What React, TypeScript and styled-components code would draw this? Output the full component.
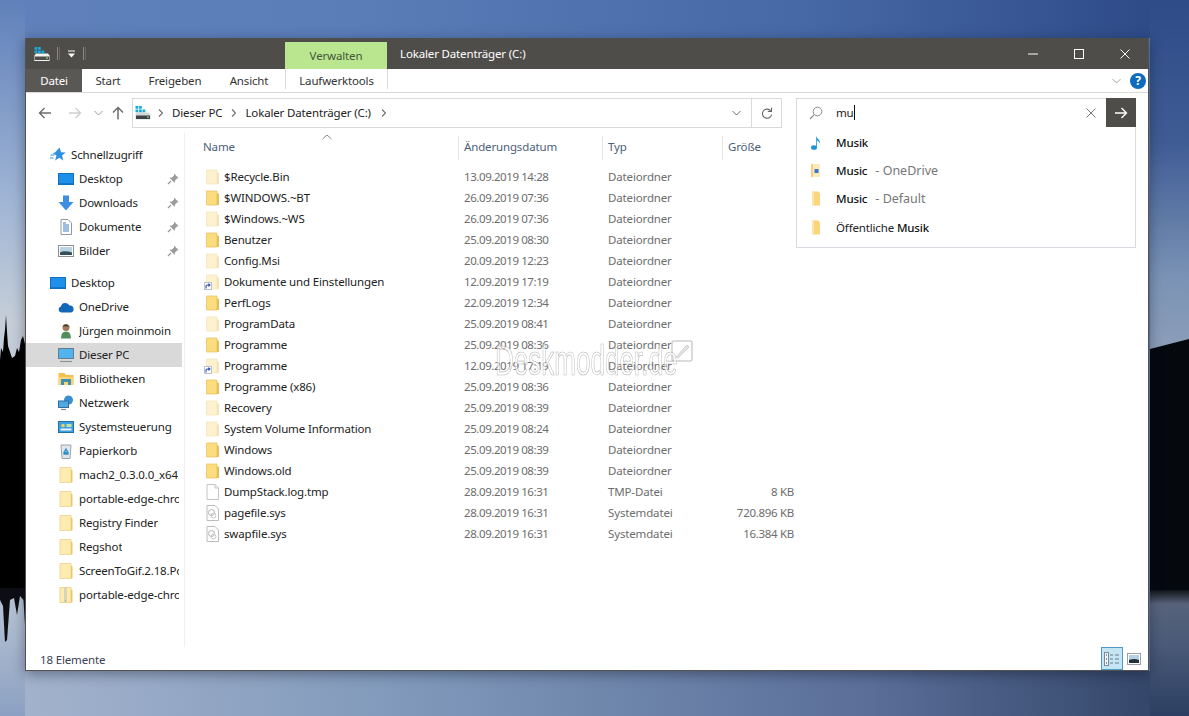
import styled, { createGlobalStyle } from "styled-components";

const FONT = `"Noto Sans", "Open Sans", "Liberation Sans", sans-serif`;

const GlobalStyle = createGlobalStyle`
  html, body {
    margin: 0;
    height: 100%;
    overflow: hidden;
    font-family: ${FONT};
    font-size: 11.5px;
    letter-spacing: -0.15px;
  }
`;

const Desktop = styled.div`
  position: relative;
  box-sizing: border-box;
  width: 100vw;
  height: 100vh;
  padding: 38px 40px 45px 25px;
  display: flex;
  background: #5c7fb9;
`;

const Wallpaper = styled.svg`
  position: absolute;
  inset: 0;
  width: 100%;
  height: 100%;
`;

const Window = styled.div`
  position: relative;
  flex: 1;
  display: flex;
  flex-direction: column;
  background: #fff;
  border: 1px solid #55534f;
  border-top: 0;
  box-shadow: 0 3px 12px rgba(10, 15, 30, 0.4);
`;

const TitleBar = styled.div`
  height: 31px;
  flex: none;
  display: flex;
  align-items: stretch;
  background: #4f4d4a;
  color: #fff;
`;

const QuickAccess = styled.div`
  width: 259px;
  display: flex;
  align-items: center;
  padding-left: 8px;
  box-sizing: border-box;
  gap: 7px;
`;

const QuickBar = styled.span`
  width: 3px;
  height: 13px;
  border-left: 1px solid #8c8a87;
  border-right: 1px solid #6a6865;
  box-sizing: border-box;
`;

const ContextTab = styled.div`
  width: 102px;
  height: 27px;
  align-self: flex-end;
  background: #b9e68f;
  color: #47563a;
  display: flex;
  align-items: center;
  justify-content: center;
`;

const WindowTitle = styled.div`
  margin-left: 13px;
  display: flex;
  align-items: center;
`;

const Controls = styled.div`
  margin-left: auto;
  display: flex;
`;

const ControlButton = styled.div`
  width: 46px;
  display: flex;
  align-items: center;
  justify-content: center;
`;

const Ribbon = styled.div`
  height: 24px;
  flex: none;
  box-sizing: border-box;
  display: flex;
  align-items: stretch;
  border-bottom: 1px solid #dadada;
  color: #333;
`;

const RibbonTab = styled.div<{ $w: number; $file?: boolean; $context?: boolean }>`
  width: ${(p) => p.$w}px;
  box-sizing: border-box;
  display: flex;
  align-items: center;
  justify-content: center;
  margin-left: ${(p) => (p.$context ? 3 : 0)}px;
  background: ${(p) => (p.$file ? "#5a5855" : "transparent")};
  color: ${(p) => (p.$file ? "#fff" : "#333")};
  border-left: ${(p) => (p.$context ? "1px solid #dcdcdc" : "0")};
  border-right: ${(p) => (p.$context ? "1px solid #dcdcdc" : "0")};
  height: ${(p) => (p.$context ? "20px" : "auto")};
  padding-top: ${(p) => (p.$context ? 2 : 0)}px;
`;

const RibbonEnd = styled.div`
  margin-left: auto;
  display: flex;
  align-items: center;
  gap: 9px;
  padding-right: 2px;
`;

const HelpBadge = styled.div`
  width: 16px;
  height: 16px;
  border-radius: 50%;
  background: #0f6cbd;
  color: #fff;
  font-size: 12px;
  font-weight: 700;
  line-height: 16px;
  text-align: center;
`;

const NavBar = styled.div`
  height: 40px;
  flex: none;
  box-sizing: border-box;
  padding-top: 5px;
  display: flex;
  align-items: flex-start;
`;

const NavArrows = styled.div`
  width: 106px;
  height: 30px;
  flex: none;
  display: flex;
  align-items: center;
  padding-left: 12px;
  box-sizing: border-box;
`;

const NavArrow = styled.span<{ $w: number; $ml?: number }>`
  width: ${(p) => p.$w}px;
  margin-left: ${(p) => p.$ml ?? 0}px;
  display: flex;
  justify-content: center;
`;

const AddressBox = styled.div`
  width: 650px;
  height: 30px;
  box-sizing: border-box;
  border: 1px solid #d9d9d9;
  display: flex;
  align-items: center;
  padding-left: 2px;
  color: #222;
`;

const Crumb = styled.span`
  white-space: nowrap;
  padding-bottom: 2px;
`;

const CrumbArrow = styled.span<{ $l: number; $r: number }>`
  display: flex;
  margin: 0 ${(p) => p.$r}px 0 ${(p) => p.$l}px;
`;

const AddressEnd = styled.div`
  margin-left: auto;
  height: 100%;
  display: flex;
  align-items: center;
`;

const AddressButton = styled.div<{ $divider?: boolean }>`
  width: 30px;
  height: 100%;
  display: flex;
  align-items: center;
  justify-content: center;
  box-sizing: border-box;
  border-left: ${(p) => (p.$divider ? "1px solid #d9d9d9" : "0")};
`;

const SearchWrap = styled.div`
  position: relative;
  width: 340px;
  margin-left: 14px;
  z-index: 2;
`;

const SearchBox = styled.div`
  height: 30px;
  box-sizing: border-box;
  border: 1px solid #d9d9d9;
  border-right: 0;
  display: flex;
  align-items: center;
  padding-left: 12px;
  background: #fff;
`;

const SearchText = styled.span`
  margin-left: 13px;
  padding-bottom: 2px;
  color: #222;
`;

const Caret = styled.span`
  display: inline-block;
  width: 1px;
  height: 15px;
  background: #111;
  vertical-align: -3px;
`;

const ClearButton = styled.span`
  margin-left: auto;
  margin-right: 10px;
  display: flex;
`;

const GoButton = styled.div`
  width: 30px;
  height: 30px;
  margin-top: -1px;
  margin-bottom: -1px;
  background: #4f4d4a;
  display: flex;
  align-items: center;
  justify-content: center;
`;

const Suggestions = styled.div`
  position: absolute;
  top: 29px;
  left: 0;
  right: 0;
  height: 121px;
  box-sizing: border-box;
  background: #fff;
  border: 1px solid #d9dbe2;
  border-top: 0;
  padding-top: 1px;
`;

const SuggestionRow = styled.div`
  height: 28.4px;
  display: flex;
  align-items: center;
  padding-left: 14px;
  gap: 15px;
  color: #222;
`;

const Hit = styled.b`
  font-weight: 500;
  color: #111;
`;

const Where = styled.span`
  color: #777;
  margin-left: 8px;
  font-size: 12.5px;
  letter-spacing: 0;
`;

const Body = styled.div`
  flex: 1;
  min-height: 0;
  display: flex;
`;

const NavPane = styled.nav`
  width: 159px;
  flex: none;
  box-sizing: border-box;
  padding-top: 10px;
  border-right: 1px solid #f0f0f0;
  margin-bottom: 0;
`;

const NavRow = styled.div<{ $top?: boolean; $selected?: boolean; $gap?: boolean }>`
  width: 156px;
  height: 24px;
  box-sizing: border-box;
  display: flex;
  align-items: center;
  gap: 5px;
  padding-left: ${(p) => (p.$top ? 24 : 32)}px;
  padding-right: 3px;
  margin-top: ${(p) => (p.$gap ? 8 : 0)}px;
  background: ${(p) => (p.$selected ? "#d9d9d9" : "transparent")};
  color: #222;
  white-space: nowrap;
  overflow: hidden;
`;

const IconSlot = styled.span`
  width: 16px;
  height: 16px;
  flex: none;
  display: flex;
`;

const NavLabel = styled.span`
  overflow: hidden;
  padding-bottom: 2px;
`;

const Pin = styled.span`
  margin-left: auto;
  display: flex;
`;

const FilePane = styled.div`
  flex: 1;
  position: relative;
  min-width: 0;
`;

const ColumnHeader = styled.div`
  height: 33px;
  box-sizing: border-box;
  padding-top: 3px;
  display: grid;
  grid-template-columns: 274px 144px 120px 72px;
  align-items: start;
  color: #4c607a;
`;

const HeaderCell = styled.div<{ $first?: boolean }>`
  height: 24px;
  display: flex;
  align-items: center;
  padding-left: ${(p) => (p.$first ? 18 : 5)}px;
  padding-bottom: 3px;
  box-sizing: border-box;
  border-right: 1px solid #e5e5e5;

  &:last-child {
    border-right: 0;
  }
`;

const SortMark = styled.svg`
  position: absolute;
  left: 137px;
  top: 1px;
`;

const FileRow = styled.div`
  height: 21px;
  display: grid;
  grid-template-columns: 258px 144px 120px 66px;
  padding-left: 21px;
  align-items: center;
  color: #6d6d6d;
`;

const FileName = styled.div`
  display: flex;
  align-items: center;
  gap: 5px;
  color: #222;
  white-space: nowrap;
`;

const FileDate = styled.div`
  letter-spacing: -0.42px;
`;

const FileIconSlot = styled.span`
  width: 13px;
  height: 16px;
  display: flex;
  position: relative;
`;

const ShortcutBadge = styled.svg`
  position: absolute;
  left: -2px;
  bottom: 0;
`;

const FileSize = styled.div`
  text-align: right;
  letter-spacing: -0.3px;
`;

const Watermark = styled.div`
  position: absolute;
  left: 310px;
  top: 204px;
  display: flex;
  align-items: flex-start;
  pointer-events: none;
`;

const WatermarkText = styled.span`
  font-family: "Liberation Sans", sans-serif;
  font-size: 42px;
  line-height: 48px;
  letter-spacing: 0;
  color: rgba(255, 255, 255, 0.6);
  -webkit-text-stroke: 0.7px rgba(110, 110, 110, 0.5);
  transform: scaleX(0.62);
  transform-origin: left top;
  width: 176px;
  white-space: nowrap;
`;

const WatermarkMark = styled.svg`
  margin-top: 3px;
`;

const StatusBar = styled.div`
  height: 23px;
  flex: none;
  display: flex;
  align-items: center;
  padding-left: 14px;
  color: #3a4256;
`;

const StatusText = styled.span`
  padding-top: 2px;
`;

const ViewButtons = styled.div`
  margin-left: auto;
  height: 100%;
  display: flex;
  align-items: center;
  gap: 4px;
  padding-right: 7px;
`;

const ViewButton = styled.div<{ $active?: boolean }>`
  width: 22px;
  height: 23px;
  box-sizing: border-box;
  display: flex;
  align-items: center;
  justify-content: center;
  background: ${(p) => (p.$active ? "#c5e5f5" : "transparent")};
  border: ${(p) => (p.$active ? "1px solid #4c9cc4" : "0")};
`;

/* --- drawings --- */

type FolderProps = { pale?: boolean };

function Folder({ pale }: FolderProps) {
  const face = pale ? "#fdf2d0" : "#fbdc7e";
  const edge = pale ? "#f3e3b6" : "#e6bf57";
  return (
    <svg width="13" height="16" viewBox="0 0 13 16">
      <path d="M0.5 1h10.5v14H0.5z" fill={face} stroke={edge} strokeWidth="0.7" />
      <path d="M11 3l2 1v11h-2z" fill={edge} />
    </svg>
  );
}

function NavFolder() {
  return (
    <svg width="16" height="16" viewBox="0 0 16 16">
      <path d="M2 0.5h11v15H2z" fill="#fdebb0" stroke="#eed48a" strokeWidth="0.8" />
      <path d="M13 2.5l1.5 1v12H13z" fill="#e9c768" />
    </svg>
  );
}

function ZipFolder() {
  return (
    <svg width="16" height="16" viewBox="0 0 16 16">
      <path d="M2 0.5h11v15H2z" fill="#fdebb0" stroke="#e9cd7c" strokeWidth="0.8" />
      <path d="M13 2.5l1.5 1v12H13z" fill="#e9c768" />
      <path d="M6.5 1h2v14h-2z" fill="#b9b9b0" />
      <path d="M7 2h1M7 4h1M7 6h1M7 8h1M7 10h1M7 12h1" stroke="#fff" strokeWidth="0.8" />
    </svg>
  );
}

function PlainFile() {
  return (
    <svg width="13" height="16" viewBox="0 0 13 16">
      <path d="M1 0.5h8l3.5 3.5v11.5H1z" fill="#fff" stroke="#c4c4c4" />
      <path d="M9 0.5V4h3.5" fill="none" stroke="#c4c4c4" />
    </svg>
  );
}

function SysFile() {
  return (
    <svg width="13" height="16" viewBox="0 0 13 16">
      <path d="M1 0.5h8l3.5 3.5v11.5H1z" fill="#fff" stroke="#bcbcbc" />
      <circle cx="5.5" cy="7.5" r="3" fill="none" stroke="#b5b5b5" />
      <circle cx="7.5" cy="10.5" r="2.4" fill="none" stroke="#c6c6c6" />
    </svg>
  );
}

function Shortcut() {
  return (
    <ShortcutBadge width="8" height="8" viewBox="0 0 8 8">
      <rect x="0.5" y="0.5" width="7" height="7" fill="#fff" stroke="#b7bfd0" />
      <path d="M2 6.5V4.2Q2 3 3.6 3H5.5M4.4 1.6L6 3 4.4 4.4" fill="none" stroke="#2a4fa8" strokeWidth="1.1" />
    </ShortcutBadge>
  );
}

function Drive({ onDark }: { onDark?: boolean }) {
  return (
    <svg width="16" height="16" viewBox="0 0 16 16">
      <path d="M0.5 9.500l1.500-2h12l1.500 2v5H0.500z" fill={onDark ? "#f2f2ee" : "#d5d8d9"} />
      <path d="M1 10.500h14v3.500H1z" fill={onDark ? "#4f4d4a" : "#3f4347"} />
      {onDark && <path d="M0.500 14h15v1H0.500z" fill="#f2f2ee" />}
      <rect x="12" y="11.500" width="2" height="1.200" fill="#7fdc7f" />
      <path d="M0.500 1h2.800v2.800H0.500zM4 1h2.800v2.800H4zM0.500 4.500h2.800v2.800H0.500zM4 4.500h2.800v2.800H4zM7.500 4.500h2.800v2.800H7.500z" fill="#19a9dc" />
    </svg>
  );
}

const navIcons: Record<string, React.ReactNode> = {
  star: (
    <svg width="16" height="16" viewBox="0 0 16 16">
      <path d="M9.5 0.5l1.6 4.8 4.6 0.2-3.7 3 1.3 5-4-2.8-4.2 2.8 1.4-4.9L2.500 6l2.500-.4z" fill="#2f8fe0" />
      <path d="M0.500 8h4M0 11h3.500" stroke="#2f8fe0" strokeWidth="1" />
    </svg>
  ),
  desktop: (
    <svg width="16" height="16" viewBox="0 0 16 16">
      <rect x="0" y="2" width="16" height="12" fill="#1e90ea" />
      <rect x="0" y="12.500" width="16" height="1.500" fill="#0e5fa8" />
      <path d="M0.500 2.500h15v11h-15z" fill="none" stroke="#0f6fc0" />
    </svg>
  ),
  download: (
    <svg width="16" height="16" viewBox="0 0 16 16">
      <path d="M5 0.500h6V7h4.500L8 15.500 0.500 7H5z" fill="#3f8fe0" />
    </svg>
  ),
  docs: (
    <svg width="16" height="16" viewBox="0 0 16 16">
      <path d="M3 0.500h7l3.500 3.500v11.500H3z" fill="#fff" stroke="#8e98a6" />
      <path d="M5 4h3M5 6h6M5 8h6M5 10h6M5 12h6" stroke="#3f7fc0" />
    </svg>
  ),
  pictures: (
    <svg width="16" height="16" viewBox="0 0 16 16">
      <rect x="0.500" y="2.500" width="15" height="11" fill="#fff" stroke="#8f8f8f" />
      <rect x="2" y="4" width="12" height="8" fill="#b9d3e4" />
      <path d="M2 9.500q4-2.500 12 0V12H2z" fill="#34505c" />
    </svg>
  ),
  cloud: (
    <svg width="16" height="16" viewBox="0 0 16 16">
      <path d="M3.500 13.500a3 3 0 0 1-.6-5.900 4.500 4.500 0 0 1 8.500-1 3.500 3.500 0 0 1 1.300 6.900z" fill="#1468b8" />
    </svg>
  ),
  user: (
    <svg width="16" height="16" viewBox="0 0 16 16">
      <circle cx="8" cy="4.500" r="3.500" fill="#a17a5c" />
      <path d="M3 15.500q0-7 5-7t5 7z" fill="#4f8f5a" />
      <path d="M4.500 3.500q3-4 7 0-3.500-.7-7 0z" fill="#3a3a3a" />
    </svg>
  ),
  pc: (
    <svg width="16" height="16" viewBox="0 0 16 16">
      <rect x="0.500" y="1.500" width="15" height="10" fill="#4fb4f0" stroke="#6a7c8c" />
      <path d="M2 14.500h12" stroke="#8a949c" strokeWidth="1.200" />
    </svg>
  ),
  library: (
    <svg width="16" height="16" viewBox="0 0 16 16">
      <path d="M0.500 2h6l1.500 2h7.500v10H0.500z" fill="#f4bf4f" />
      <path d="M0.500 6h15v8H0.500z" fill="#f9d67c" />
      <rect x="3" y="8" width="10" height="6" fill="#3f8fb0" />
      <rect x="6" y="11" width="4" height="3" fill="#f9d67c" />
    </svg>
  ),
  network: (
    <svg width="16" height="16" viewBox="0 0 16 16">
      <circle cx="10.500" cy="5" r="4.500" fill="#3c8fd0" />
      <rect x="0.500" y="6" width="10" height="6.500" fill="#4fa8e0" stroke="#2f6f9f" />
      <path d="M3 14.500h5" stroke="#7f8c96" strokeWidth="1.200" />
    </svg>
  ),
  control: (
    <svg width="16" height="16" viewBox="0 0 16 16">
      <rect x="0.500" y="2.500" width="15" height="11" fill="#3f9fe0" stroke="#1f6fa8" />
      <circle cx="5" cy="6.500" r="1.800" fill="#f0d060" />
      <rect x="8.500" y="5" width="5" height="3" fill="#bfe7a0" />
      <rect x="2.500" y="9.500" width="11" height="2" fill="#e6f3fb" />
    </svg>
  ),
  bin: (
    <svg width="16" height="16" viewBox="0 0 16 16">
      <path d="M3 2h10l-1 13.500H4z" fill="#e2e6ea" stroke="#9aa4ad" />
      <path d="M8 6l2 3.500H6zM5.500 11h5" stroke="#2f8fc8" strokeWidth="1.300" fill="none" />
    </svg>
  ),
  folder: <NavFolder />,
  zip: <ZipFolder />,
};

const PinIcon = () => (
  <svg width="12" height="12" viewBox="0 0 12 12">
    <path d="M7 0.500l4.500 4.500-1.500.5-2 2-.3 2.500L2.500 4.800 5 4.500l2-2z" fill="#9a9a9a" />
    <path d="M4 8L1 11" stroke="#9a9a9a" strokeWidth="1.200" />
  </svg>
);

const Chevron = ({ color = "#8a8a8a" }: { color?: string }) => (
  <svg width="9" height="6" viewBox="0 0 9 6">
    <path d="M0.500 1l4 4 4-4" fill="none" stroke={color} />
  </svg>
);

const SmallRight = () => (
  <svg width="5" height="8" viewBox="0 0 5 8">
    <path d="M1 0.500L4.500 4 1 7.500" fill="none" stroke="#6d6d6d" strokeWidth="1.100" />
  </svg>
);

const ArrowLeft = ({ color }: { color: string }) => (
  <svg width="14" height="12" viewBox="0 0 14 12">
    <path d="M13 6H1.500M6.500 1l-5 5 5 5" fill="none" stroke={color} strokeWidth="1.400" />
  </svg>
);

const ArrowRight = ({ color }: { color: string }) => (
  <svg width="14" height="12" viewBox="0 0 14 12">
    <path d="M1 6h11.500M7.500 1l5 5-5 5" fill="none" stroke={color} strokeWidth="1.400" />
  </svg>
);

const ArrowUp = () => (
  <svg width="12" height="14" viewBox="0 0 12 14">
    <path d="M6 13.500V1.500M1 6.500l5-5 5 5" fill="none" stroke="#6d6d6d" strokeWidth="1.500" />
  </svg>
);

const Refresh = () => (
  <svg width="12" height="13" viewBox="0 0 12 13">
    <path d="M9.800 4A4.600 4.600 0 1 0 10.600 7.500" fill="none" stroke="#666" strokeWidth="1.100" />
    <path d="M10.500 0.800V4.500H6.800" fill="none" stroke="#666" strokeWidth="1.100" />
  </svg>
);

const Magnifier = () => (
  <svg width="14" height="14" viewBox="0 0 14 14">
    <circle cx="8.500" cy="5.500" r="4.300" fill="none" stroke="#8a8a8a" />
    <path d="M5.300 8.700L1 13" stroke="#8a8a8a" strokeWidth="1.200" />
  </svg>
);

const Cross = ({ size, color }: { size: number; color: string }) => (
  <svg width={size} height={size} viewBox="0 0 10 10">
    <path d="M0.500 0.500l9 9M9.500 0.500l-9 9" stroke={color} />
  </svg>
);

const MusicNote = () => (
  <svg width="10" height="15" viewBox="0 0 10 15">
    <ellipse cx="3" cy="12.500" rx="3" ry="2.300" fill="#1f93d6" />
    <path d="M5.200 12.500V0.500C5.500 4 9.800 4.500 9 9 8.500 6.500 7 6 6 5.500v7z" fill="#1f93d6" />
  </svg>
);

const SuggestMusicFile = () => (
  <svg width="10" height="15" viewBox="0 0 10 15">
    <path d="M0 1h9v13H0z" fill="#fbeac0" />
    <path d="M0 1h2v13H0z" fill="#f8cf7a" />
    <rect x="3.500" y="6" width="4" height="4" fill="#3a78c8" />
  </svg>
);

const SuggestFolder = () => (
  <svg width="10" height="15" viewBox="0 0 10 15">
    <path d="M1 0.500h6.500l1.500 2v12H1z" fill="#f9d67c" />
    <path d="M1 0.500h2v14H1z" fill="#fbe6ad" />
  </svg>
);

const DetailsView = () => (
  <svg width="16" height="16" viewBox="0 0 16 16">
    <rect x="0.500" y="1.500" width="4" height="13" fill="#eef6fb" stroke="#7a8a94" />
    <path d="M2 4h1M2 8h1M2 12h1" stroke="#333" />
    <path d="M6 4h3M11 4h4M6 8h3M11 8h4M6 12h3M11 12h4" stroke="#6a7c88" />
  </svg>
);

const PreviewView = () => (
  <svg width="14" height="12" viewBox="0 0 14 12">
    <rect x="0.500" y="0.500" width="13" height="11" fill="#fff" stroke="#9aa0a6" />
    <rect x="2" y="2" width="10" height="8" fill="#b5d0e2" />
    <path d="M2 7q5-2 10 0v3H2z" fill="#24323c" />
  </svg>
);

/* --- data --- */

type NavItem = { icon: string; label: string; top?: boolean; pin?: boolean; selected?: boolean; gap?: boolean };

const navItems: NavItem[] = [
  { icon: "star", label: "Schnellzugriff", top: true },
  { icon: "desktop", label: "Desktop", pin: true },
  { icon: "download", label: "Downloads", pin: true },
  { icon: "docs", label: "Dokumente", pin: true },
  { icon: "pictures", label: "Bilder", pin: true },
  { icon: "desktop", label: "Desktop", top: true, gap: true },
  { icon: "cloud", label: "OneDrive" },
  { icon: "user", label: "Jürgen moinmoin" },
  { icon: "pc", label: "Dieser PC", selected: true },
  { icon: "library", label: "Bibliotheken" },
  { icon: "network", label: "Netzwerk" },
  { icon: "control", label: "Systemsteuerung" },
  { icon: "bin", label: "Papierkorb" },
  { icon: "folder", label: "mach2_0.3.0.0_x64" },
  { icon: "folder", label: "portable-edge-chromium" },
  { icon: "folder", label: "Registry Finder" },
  { icon: "folder", label: "Regshot" },
  { icon: "folder", label: "ScreenToGif.2.18.Portable" },
  { icon: "zip", label: "portable-edge-chromium" },
];

type FileItem = {
  name: string;
  date: string;
  type: string;
  size?: string;
  kind: "folder" | "pale" | "link" | "file" | "sys";
};

const files: FileItem[] = [
  { name: "$Recycle.Bin", date: "13.09.2019 14:28", type: "Dateiordner", kind: "pale" },
  { name: "$WINDOWS.~BT", date: "26.09.2019 07:36", type: "Dateiordner", kind: "folder" },
  { name: "$Windows.~WS", date: "26.09.2019 07:36", type: "Dateiordner", kind: "pale" },
  { name: "Benutzer", date: "25.09.2019 08:30", type: "Dateiordner", kind: "folder" },
  { name: "Config.Msi", date: "20.09.2019 12:23", type: "Dateiordner", kind: "pale" },
  { name: "Dokumente und Einstellungen", date: "12.09.2019 17:19", type: "Dateiordner", kind: "link" },
  { name: "PerfLogs", date: "22.09.2019 12:34", type: "Dateiordner", kind: "folder" },
  { name: "ProgramData", date: "25.09.2019 08:41", type: "Dateiordner", kind: "pale" },
  { name: "Programme", date: "25.09.2019 08:36", type: "Dateiordner", kind: "folder" },
  { name: "Programme", date: "12.09.2019 17:19", type: "Dateiordner", kind: "link" },
  { name: "Programme (x86)", date: "25.09.2019 08:36", type: "Dateiordner", kind: "folder" },
  { name: "Recovery", date: "25.09.2019 08:39", type: "Dateiordner", kind: "pale" },
  { name: "System Volume Information", date: "25.09.2019 08:24", type: "Dateiordner", kind: "pale" },
  { name: "Windows", date: "25.09.2019 08:39", type: "Dateiordner", kind: "folder" },
  { name: "Windows.old", date: "25.09.2019 08:39", type: "Dateiordner", kind: "folder" },
  { name: "DumpStack.log.tmp", date: "28.09.2019 16:31", type: "TMP-Datei", size: "8 KB", kind: "file" },
  { name: "pagefile.sys", date: "28.09.2019 16:31", type: "Systemdatei", size: "720.896 KB", kind: "sys" },
  { name: "swapfile.sys", date: "28.09.2019 16:31", type: "Systemdatei", size: "16.384 KB", kind: "sys" },
];

function FileIcon({ kind }: { kind: FileItem["kind"] }) {
  return (
    <FileIconSlot>
      {kind === "folder" && <Folder />}
      {kind === "pale" && <Folder pale />}
      {kind === "link" && <Folder pale />}
      {kind === "file" && <PlainFile />}
      {kind === "sys" && <SysFile />}
      {kind === "link" && <Shortcut />}
    </FileIconSlot>
  );
}

function Backdrop() {
  return (
    <Wallpaper viewBox="0 0 1189 716" preserveAspectRatio="none">
      <defs>
        <linearGradient id="leftSky" x1="0" y1="0" x2="0" y2="716" gradientUnits="userSpaceOnUse">
          <stop offset="0" stopColor="#5f80ba" />
          <stop offset="0.28" stopColor="#a0b5d5" />
          <stop offset="0.45" stopColor="#c5ced8" />
          <stop offset="0.85" stopColor="#b4c0d2" />
          <stop offset="1" stopColor="#8ba0c2" />
        </linearGradient>
        <linearGradient id="rightSky" x1="0" y1="0" x2="0" y2="716" gradientUnits="userSpaceOnUse">
          <stop offset="0" stopColor="#2e4b88" />
          <stop offset="0.2" stopColor="#3f5c95" />
          <stop offset="0.39" stopColor="#7b93b5" />
          <stop offset="0.48" stopColor="#8a9db8" />
          <stop offset="0.82" stopColor="#5c667b" />
          <stop offset="0.9" stopColor="#4a5a78" />
          <stop offset="1" stopColor="#2c3f62" />
        </linearGradient>
        <linearGradient id="topBand" x1="25" y1="0" x2="1150" y2="0" gradientUnits="userSpaceOnUse">
          <stop offset="0" stopColor="#5f80ba" />
          <stop offset="0.3" stopColor="#5a7db8" />
          <stop offset="0.7" stopColor="#4668a5" />
          <stop offset="1" stopColor="#2e4b88" />
        </linearGradient>
        <linearGradient id="bottomBand" x1="25" y1="0" x2="1150" y2="0" gradientUnits="userSpaceOnUse">
          <stop offset="0" stopColor="#a2b2cc" />
          <stop offset="0.35" stopColor="#7f98ba" />
          <stop offset="0.75" stopColor="#5a6e98" />
          <stop offset="1" stopColor="#34476a" />
        </linearGradient>
        <linearGradient id="fade" x1="0" y1="0" x2="0" y2="1">
          <stop offset="0" stopColor="#05080c" stopOpacity="1" />
          <stop offset="1" stopColor="#05080c" stopOpacity="0" />
        </linearGradient>
        <filter id="soft">
          <feGaussianBlur stdDeviation="0.7" />
        </filter>
      </defs>
      <rect width="1189" height="38" fill="url(#topBand)" />
      <rect y="671" width="1189" height="45" fill="url(#bottomBand)" />
      <rect width="25" height="716" fill="url(#leftSky)" />
      <rect x="1150" width="39" height="716" fill="url(#rightSky)" />
      <g filter="url(#soft)">
        <path
          d="M0 360L1 348 3 352 4 338 5 330 6 315 7 332 8 346 10 352 12 358 15 356 17 348 19 352 21 340 23 336 25 344V592H0z"
          fill="#040506"
        />
        <path d="M0 588H25V625L23.500 600 20 596 17 615 14 598 10 600 7 640 5 642 3 606 0 600z" fill="#0a0d12" />
      </g>
      <path d="M1150 349L1189 339V590H1150z" fill="#05080d" />
      <rect x="1150" y="588" width="39" height="16" fill="url(#fade)" />
    </Wallpaper>
  );
}

export default function App() {
  return (
    <>
      <GlobalStyle />
      <Desktop>
        <Backdrop />
        <Window>
          <TitleBar>
            <QuickAccess>
              <Drive onDark />
              <QuickBar />
              <svg width="9" height="8" viewBox="0 0 9 8">
                <path d="M1 1h7" stroke="#fff" />
                <path d="M1 3.500h7L4.500 7.500z" fill="#fff" />
              </svg>
              <QuickBar />
            </QuickAccess>
            <ContextTab>Verwalten</ContextTab>
            <WindowTitle>Lokaler Datenträger (C:)</WindowTitle>
            <Controls>
              <ControlButton>
                <svg width="10" height="2" viewBox="0 0 10 2">
                  <path d="M0 1h10" stroke="#fff" />
                </svg>
              </ControlButton>
              <ControlButton>
                <svg width="10" height="10" viewBox="0 0 10 10">
                  <rect x="0.500" y="0.500" width="9" height="9" fill="none" stroke="#fff" />
                </svg>
              </ControlButton>
              <ControlButton>
                <Cross size={10} color="#fff" />
              </ControlButton>
            </Controls>
          </TitleBar>

          <Ribbon>
            <RibbonTab $w={56} $file>Datei</RibbonTab>
            <RibbonTab $w={52}>Start</RibbonTab>
            <RibbonTab $w={82}>Freigeben</RibbonTab>
            <RibbonTab $w={66}>Ansicht</RibbonTab>
            <RibbonTab $w={103} $context>Laufwerktools</RibbonTab>
            <RibbonEnd>
              <Chevron color="#a0a0a0" />
              <HelpBadge>?</HelpBadge>
            </RibbonEnd>
          </Ribbon>

          <NavBar>
            <NavArrows>
              <NavArrow $w={14}><ArrowLeft color="#6d6d6d" /></NavArrow>
              <NavArrow $w={14} $ml={16}><ArrowRight color="#cfcfcf" /></NavArrow>
              <NavArrow $w={10} $ml={11}><Chevron color="#9a9a9a" /></NavArrow>
              <NavArrow $w={14} $ml={8}><ArrowUp /></NavArrow>
            </NavArrows>
            <AddressBox>
              <Drive />
              <CrumbArrow $l={7} $r={9}><SmallRight /></CrumbArrow>
              <Crumb>Dieser PC</Crumb>
              <CrumbArrow $l={9} $r={9}><SmallRight /></CrumbArrow>
              <Crumb>Lokaler Datenträger (C:)</Crumb>
              <CrumbArrow $l={10} $r={0}><SmallRight /></CrumbArrow>
              <AddressEnd>
                <AddressButton><Chevron color="#6d6d6d" /></AddressButton>
                <AddressButton $divider><Refresh /></AddressButton>
              </AddressEnd>
            </AddressBox>
            <SearchWrap>
              <SearchBox>
                <Magnifier />
                <SearchText>mu<Caret /></SearchText>
                <ClearButton><Cross size={10} color="#777" /></ClearButton>
                <GoButton><ArrowRight color="#fff" /></GoButton>
              </SearchBox>
              <Suggestions>
                <SuggestionRow>
                  <MusicNote />
                  <span><Hit>Musik</Hit></span>
                </SuggestionRow>
                <SuggestionRow>
                  <SuggestMusicFile />
                  <span><Hit>Music</Hit><Where>- OneDrive</Where></span>
                </SuggestionRow>
                <SuggestionRow>
                  <SuggestFolder />
                  <span><Hit>Music</Hit><Where>- Default</Where></span>
                </SuggestionRow>
                <SuggestionRow>
                  <SuggestFolder />
                  <span>Öffentliche <Hit>Musik</Hit></span>
                </SuggestionRow>
              </Suggestions>
            </SearchWrap>
          </NavBar>

          <Body>
            <NavPane>
              {navItems.map((item, i) => (
                <NavRow key={i} $top={item.top} $selected={item.selected} $gap={item.gap}>
                  <IconSlot>{navIcons[item.icon]}</IconSlot>
                  <NavLabel>{item.label}</NavLabel>
                  {item.pin && <Pin><PinIcon /></Pin>}
                </NavRow>
              ))}
            </NavPane>
            <FilePane>
              <SortMark width="10" height="6" viewBox="0 0 10 6">
                <path d="M0.500 5L5 1l4.500 4" fill="none" stroke="#8a8a8a" />
              </SortMark>
              <ColumnHeader>
                <HeaderCell $first>Name</HeaderCell>
                <HeaderCell>Änderungsdatum</HeaderCell>
                <HeaderCell>Typ</HeaderCell>
                <HeaderCell>Größe</HeaderCell>
              </ColumnHeader>
              {files.map((f, i) => (
                <FileRow key={i}>
                  <FileName>
                    <FileIcon kind={f.kind} />
                    {f.name}
                  </FileName>
                  <FileDate>{f.date}</FileDate>
                  <div>{f.type}</div>
                  <FileSize>{f.size}</FileSize>
                </FileRow>
              ))}
              <Watermark>
                <WatermarkText>Deskmodder.de</WatermarkText>
                <WatermarkMark width="22" height="22" viewBox="0 0 22 22">
                  <rect x="1" y="1" width="20" height="20" rx="2" fill="rgba(255,255,255,.5)" stroke="#cfcfcf" strokeWidth="1.500" />
                  <path d="M5 17L16 5l2 2L7 18z" fill="#e4e4e4" stroke="#cfcfcf" />
                </WatermarkMark>
              </Watermark>
            </FilePane>
          </Body>

          <StatusBar>
            <StatusText>18 Elemente</StatusText>
            <ViewButtons>
              <ViewButton $active><DetailsView /></ViewButton>
              <PreviewView />
            </ViewButtons>
          </StatusBar>
        </Window>
      </Desktop>
    </>
  );
}
